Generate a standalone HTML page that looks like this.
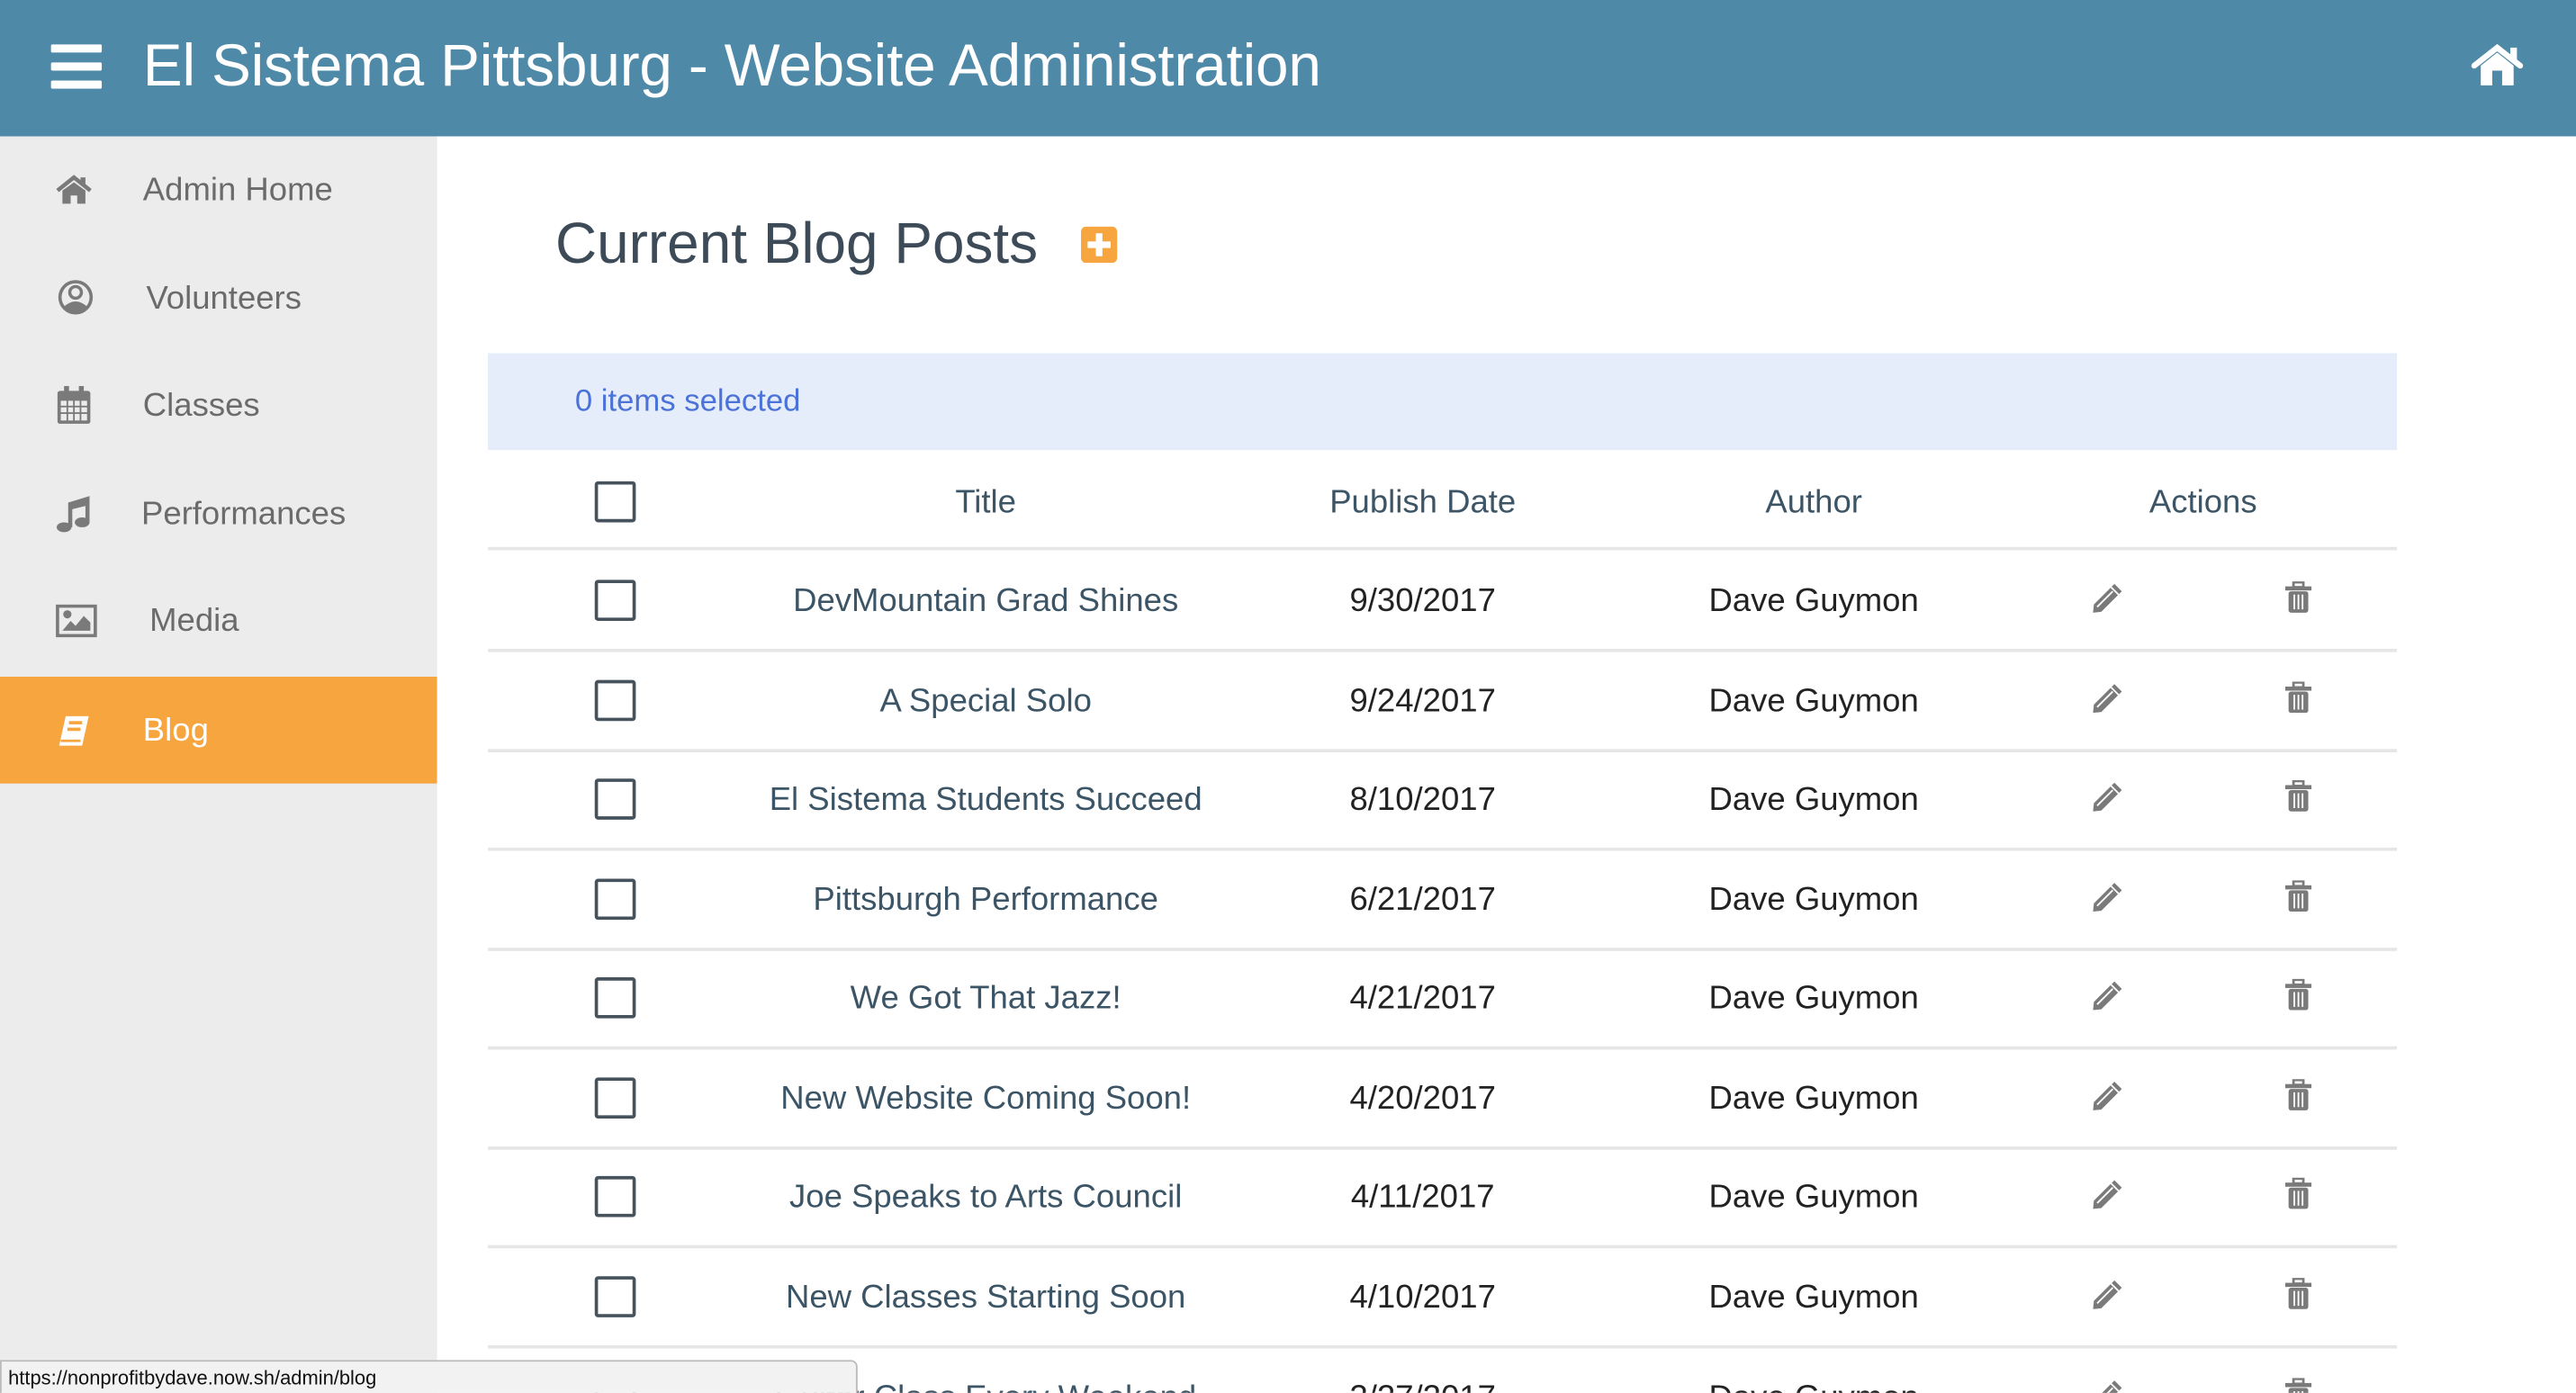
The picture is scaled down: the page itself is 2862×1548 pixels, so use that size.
<!DOCTYPE html>
<html><head><meta charset="utf-8"><style>
html,body{margin:0;padding:0;width:2862px;height:1548px;overflow:hidden;background:#fff}
#w{position:absolute;left:0;top:0;width:1568px;height:848px;transform:scale(1.8253);transform-origin:0 0;font-family:"Liberation Sans",sans-serif;overflow:hidden}
.hdr{position:absolute;left:0;top:0;width:1568px;height:83px;background:#4f89a8}
.hdr .t{position:absolute;left:87px;top:19px;color:#fff;font-size:36px;letter-spacing:-0.1px}
.side{position:absolute;left:0;top:83px;width:266px;height:765px;background:#ececec}
.it{position:absolute;left:0;width:266px;height:65px}
.it span{position:absolute;top:22px;font-size:20px;color:#6b6b6b}
.it svg{position:absolute;left:34px;top:23px}
.blog{background:#f6a53f}
.blog span{color:#fff}
h1{position:absolute;left:338px;top:129px;margin:0;font-weight:normal;font-size:35px;color:#3d4b59}
.plus{position:absolute;left:658px;top:138px;width:22px;height:22px;background:#f6a53f;border-radius:3px}
.sel{position:absolute;left:297px;top:215px;width:1162px;height:59px;background:#e6edfa}
.sel span{position:absolute;left:53px;top:19px;font-size:19px;color:#4a72d8}
.row{position:absolute;left:297px;width:1162px;height:60px;border-bottom:2px solid #e6e6e6}
.cb{position:absolute;left:65px;top:18px;width:21px;height:21px;border:2px solid #46525c;border-radius:2px}
.c{position:absolute;top:20px;font-size:20px;text-align:center;white-space:nowrap}
.ti{left:153px;width:300px;color:#3c5566}
.dt{left:469px;width:200px;color:#222}
.au{left:707px;width:200px;color:#222}
.hd .c{color:#3c5566}
.pen{position:absolute;left:976px;top:19px}
.tr{position:absolute;left:1094px;top:19px}
.status{position:absolute;left:0;top:828px;width:520px;height:22px;background:#f2f2f2;border:1px solid #bbb;border-radius:0 4px 0 0;font-size:12px;color:#111}
.status span{position:absolute;left:4px;top:3px}
</style></head><body><div id="w">
<div class="hdr">
<svg style="position:absolute;left:31px;top:27px" width="31" height="27"><rect y="0" width="31" height="5" rx="1" fill="#fff"/><rect y="11" width="31" height="5" rx="1" fill="#fff"/><rect y="22" width="31" height="5" rx="1" fill="#fff"/></svg>
<div class="t">El Sistema Pittsburg - Website Administration</div>
<svg style="position:absolute;left:1504px;top:26px" width="32" height="27" viewBox="0 0 32 27"><path d="M2 14 L16 3 L30 14" stroke="#fff" stroke-width="3.5" fill="none" stroke-linecap="round"/><rect x="24" y="3" width="4" height="8" fill="#fff"/><path d="M6 14 L16 6 L26 14 V26 H19 V17 H13 V26 H6 Z" fill="#fff"/></svg>
</div>
<div class="side">
<div class="it" style="top:0"><svg width="22" height="20" viewBox="0 0 22 20"><path d="M1 10 L11 2 L21 10" stroke="#7a7a7a" stroke-width="2.5" fill="none"/><rect x="15" y="2" width="3" height="5" fill="#7a7a7a"/><path d="M4 10 L11 5 L18 10 V18 H13 V13 H9 V18 H4 Z" fill="#7a7a7a"/></svg><span style="left:87px">Admin Home</span></div>
<div class="it" style="top:66px"><svg width="24" height="24" viewBox="0 0 24 24" style="top:20px"><circle cx="12" cy="12" r="10.5" fill="#7a7a7a"/><circle cx="12" cy="12" r="8.5" fill="#ececec"/><circle cx="12" cy="9" r="4.5" fill="#7a7a7a"/><circle cx="12" cy="9" r="2.6" fill="#ececec"/><path d="M4.5 18 Q12 11 19.5 18 Q12 24 4.5 18Z" fill="#7a7a7a"/></svg><span style="left:89px">Volunteers</span></div>
<div class="it" style="top:131px"><svg width="22" height="24" viewBox="0 0 22 24" style="top:21px"><rect x="1" y="3" width="20" height="20" rx="1.5" fill="#7a7a7a"/><rect x="5" y="0" width="3" height="6" fill="#7a7a7a"/><rect x="14" y="0" width="3" height="6" fill="#7a7a7a"/><g fill="#ececec"><rect x="3" y="9" width="3.5" height="3"/><rect x="7.5" y="9" width="3" height="3"/><rect x="11.5" y="9" width="3" height="3"/><rect x="15.5" y="9" width="3.5" height="3"/><rect x="3" y="13" width="3.5" height="3"/><rect x="7.5" y="13" width="3" height="3"/><rect x="11.5" y="13" width="3" height="3"/><rect x="15.5" y="13" width="3.5" height="3"/><rect x="3" y="17" width="3.5" height="4"/><rect x="7.5" y="17" width="3" height="4"/><rect x="11.5" y="17" width="3" height="4"/><rect x="15.5" y="17" width="3.5" height="4"/></g></svg><span style="left:87px">Classes</span></div>
<div class="it" style="top:197px"><svg width="22" height="24" viewBox="0 0 22 24" style="top:21px"><ellipse cx="5" cy="20" rx="4.5" ry="3" fill="#7a7a7a"/><ellipse cx="16" cy="17" rx="4.5" ry="3" fill="#7a7a7a"/><path d="M7.5 20 V5 L20.5 1 V17 H18 V7 L10 9 V20 Z" fill="#7a7a7a"/></svg><span style="left:86px">Performances</span></div>
<div class="it" style="top:262px"><svg width="26" height="20" viewBox="0 0 26 20" style="top:23px;left:34px"><rect x="1" y="1" width="23" height="18" fill="none" stroke="#7a7a7a" stroke-width="2"/><circle cx="7" cy="6" r="2.5" fill="#7a7a7a"/><path d="M4 16 L9 10 L12 13 L17 7 L21 11 V16 Z" fill="#7a7a7a"/></svg><span style="left:91px">Media</span></div>
<div class="it blog" style="top:329px"><svg width="22" height="22" viewBox="0 0 22 22"><path d="M6 1 H20 L16 19 H2 Z" fill="#fff"/><rect x="8" y="4" width="8" height="2" fill="#f6a53f"/><rect x="7" y="8" width="8" height="2" fill="#f6a53f"/><path d="M3 16 H15" stroke="#f6a53f" stroke-width="1.5"/></svg><span style="left:87px">Blog</span></div>
</div>
<h1>Current Blog Posts</h1>
<div class="plus"><svg width="22" height="22"><rect x="9" y="4" width="4" height="14" fill="#fff"/><rect x="4" y="9" width="14" height="4" fill="#fff"/></svg></div>
<div class="sel"><span>0 items selected</span></div>
<div class="row hd" style="top:275px;height:58px"><div class="cb"></div><div class="c ti">Title</div><div class="c dt">Publish Date</div><div class="c au">Author</div><div class="c" style="left:944px;width:200px">Actions</div></div>
<div class="row" style="top:335px"><div class="cb"></div><div class="c ti">DevMountain Grad Shines</div><div class="c dt">9/30/2017</div><div class="c au">Dave Guymon</div>
<svg class="pen" width="20" height="20" viewBox="0 0 20 20"><path d="M1 19 L1.5 14 L14 1.5 L18.5 6 L6 18.5 Z" fill="#7a7a7a"/><path d="M3.5 15.5 L13 6" stroke="#fff" stroke-width="1"/><path d="M12 3.5 L16.5 8" stroke="#fff" stroke-width="1"/></svg><svg class="tr" width="16" height="20" viewBox="0 0 16 20"><rect x="0" y="3" width="16" height="2.5" fill="#7a7a7a"/><rect x="5" y="0.5" width="6" height="3" fill="none" stroke="#7a7a7a" stroke-width="1.5"/><rect x="2" y="6" width="12" height="13" rx="1.5" fill="#7a7a7a"/><g stroke="#fff" stroke-width="1"><path d="M5.5 8 V17 M8 8 V17 M10.5 8 V17"/></g></svg></div>
</div>
<script>
var d=[["A Special Solo","9/24/2017"],["El Sistema Students Succeed","8/10/2017"],["Pittsburgh Performance","6/21/2017"],["We Got That Jazz!","4/21/2017"],["New Website Coming Soon!","4/20/2017"],["Joe Speaks to Arts Council","4/11/2017"],["New Classes Starting Soon","4/10/2017"],["Guitar Class Every Weekend","3/27/2017"]];
var tops=[396,456,517,577,638,698,759,820];
var tpl=document.querySelector('.row:not(.hd)[style*="335"]');
d.forEach(function(r,i){var n=tpl.cloneNode(true);n.style.top=tops[i]+'px';n.querySelector('.ti').textContent=r[0];n.querySelector('.dt').textContent=r[1];document.getElementById('w').appendChild(n);});
var s=document.createElement('div');s.className='status';s.innerHTML='<span>https://nonprofitbydave.now.sh/admin/blog</span>';document.getElementById('w').appendChild(s);
</script>
</body></html>
